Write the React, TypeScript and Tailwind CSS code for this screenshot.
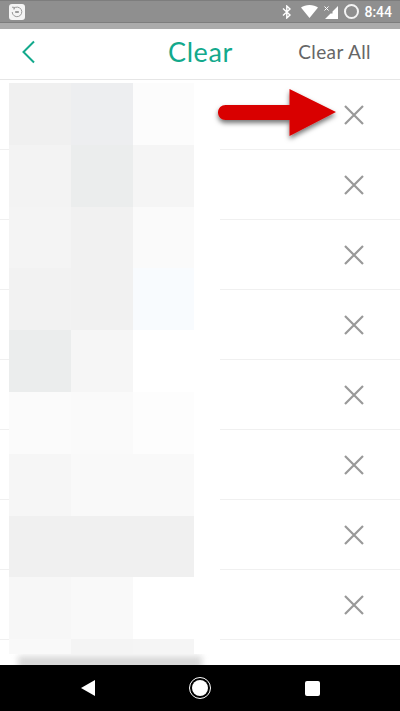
import React from 'react';

const tiles = [
  ['bg-[#f0f0f0]', 'bg-[#edeef0]', 'bg-[#fcfcfc]'],
  ['bg-[#f3f3f3]', 'bg-[#ebeded]', 'bg-[#f5f5f5]'],
  ['bg-[#f4f4f4]', 'bg-[#f1f1f1]', 'bg-[#fafafa]'],
  ['bg-[#f2f2f2]', 'bg-[#f1f1f1]', 'bg-[#f8fbfe]'],
  ['bg-[#ebeded]', 'bg-[#f6f6f6]', 'bg-white'],
  ['bg-[#fbfbfb]', 'bg-[#fafafa]', 'bg-[#fdfdfd]'],
  ['bg-[#f6f6f6]', 'bg-[#f9f9f9]', 'bg-[#f9f9f9]'],
  ['bg-[#f0f0f0]', 'bg-[#f0f0f0]', 'bg-[#f0f0f0]'],
  ['bg-[#f7f7f7]', 'bg-[#f9f9f9]', 'bg-white'],
];

const CloseIcon = () => (
  <svg width="20" height="20" viewBox="0 0 20 20" fill="none" stroke="#999999" strokeWidth="2.2">
    <path d="M1 1 19 19M19 1 1 19" />
  </svg>
);

const StatusBar = () => (
  <div className="h-[29px] bg-[#ababab]">
    <div className="h-[23px] bg-[#8f8f8f] border-b border-[#7d7d7d] border-t border-t-[#7d7d7d] flex items-center pl-[9px] pr-2">
      <div className="w-4 h-4 rounded-[3px] bg-[#f4f4f4] flex items-center justify-center">
        <svg width="12" height="12" viewBox="0 0 12 12" fill="none" stroke="#9a9a9a" strokeWidth="1">
          <path d="M2.5 2.6A4.8 4.8 0 1 1 1.2 6" />
          <path d="M1 1.2 3.6 1.4 3 3.6" />
          <rect x="4.2" y="5" width="3.6" height="2" fill="#9a9a9a" stroke="none" />
        </svg>
      </div>
      <div className="ml-auto flex items-center">
        <svg width="10" height="14" viewBox="0 0 10 14" fill="none" stroke="#ffffff" strokeWidth="1.4">
          <path d="M1 3.6 8 10 4.8 13V1L8 4 1 10.4" />
        </svg>
        <svg className="ml-[9px]" width="17" height="13" viewBox="0 0 17 13" fill="#ffffff">
          <path d="M0 2.6C2.2.9 5.1 0 8.5 0S14.800.9 17 2.600L8.500 13Z" />
        </svg>
        <svg className="ml-[6px]" width="14" height="14" viewBox="0 0 14 14" fill="#ffffff">
          <path d="M14 1V14H1L6.500 8.500H8.500V6.500Z" />
          <path d="M.5 1.500 4.500 5.500M4.500 1.500.5 5.500" stroke="#ffffff" strokeWidth="1" />
        </svg>
        <div className="ml-[6px] w-[15px] h-[15px] rounded-full border-2 border-[#f4f4f4]" />
        <span className="ml-[5px] text-[14px] leading-none text-white font-medium font-['Roboto',sans-serif]">8:44</span>
      </div>
    </div>
  </div>
);

const NavBar = () => (
  <div className="h-[46px] bg-black flex items-center pl-[81px] shrink-0">
    <svg width="14" height="16" viewBox="0 0 14 16" fill="#ffffff" className="mr-[94px]">
      <path d="M14 0V16L0 8Z" />
    </svg>
    <div className="w-[22px] h-[22px] rounded-full border border-white p-[2px]">
      <div className="w-full h-full rounded-full bg-white" />
    </div>
    <div className="ml-[94px] w-[15px] h-[15px] rounded-[2px] bg-white" />
  </div>
);

export default function App() {
  return (
    <div className="w-[400px] h-[711px] flex flex-col bg-white overflow-hidden font-['Lato',sans-serif]">
      <StatusBar />
      <div className="h-[51px] shrink-0 border-b border-[#e6e6e6] flex items-center pb-[5px]">
        <svg width="13" height="24" viewBox="0 0 13 24" fill="none" stroke="#13a98c" strokeWidth="2" className="ml-[22px]">
          <path d="M12 1.500 1.500 12 12 22.500" />
        </svg>
        <span className="ml-[133px] text-[27px] leading-none tracking-[0.6px] text-[#13a98c]">Clear</span>
        <span className="ml-auto mr-[29px] text-[19px] leading-none tracking-[0.4px] text-[#666666]">Clear All</span>
      </div>

      <div className="relative flex-1 flex flex-col overflow-hidden">
        {Array.from({ length: 9 }).map((_, i) => (
          <div key={i} className="h-[70px] shrink-0 border-b border-[#f0f0f0] flex items-center justify-end pr-[36px]">
            <CloseIcon />
          </div>
        ))}

        {/* pixelated names over the rows */}
        <div className="absolute left-[9px] top-[3px] w-[211px] bg-white">
          <div className="w-[185px] grid grid-cols-[62px_62px_61px] auto-rows-[61.800px]">
            {tiles.flat().map((c, i) => (
              <div key={i} className={c} />
            ))}
          </div>
          <div className="w-[185px] h-[15px] grid grid-cols-[62px_62px_61px]">
            <div className="bg-[#f9f9f9]" />
            <div className="bg-[#f4f4f4]" />
            <div className="bg-[#f5f5f5]" />
          </div>
          <div className="h-[11px] overflow-hidden">
            <div className="ml-[9px] mt-[2px] w-[184px] h-[14px] bg-[#d8d8d8] blur-[3px]" />
          </div>
        </div>

        {/* red arrow annotation */}
        <svg className="absolute left-[214px] top-[6px] overflow-visible" width="126" height="54" viewBox="0 0 126 54">
          <defs>
            <filter id="arrowShadow" x="-20%" y="-30%" width="140%" height="170%">
              <feDropShadow dx="0" dy="3" stdDeviation="2.500" floodColor="#000000" floodOpacity="0.55" />
            </filter>
          </defs>
          <path
            d="M11.500 19H75.500V3L122 26 75.500 50V34H11.500C7.500 34 4 31 4 26.500S7.500 19 11.500 19Z"
            fill="#d90000"
            filter="url(#arrowShadow)"
          />
        </svg>
      </div>

      <NavBar />
    </div>
  );
}
